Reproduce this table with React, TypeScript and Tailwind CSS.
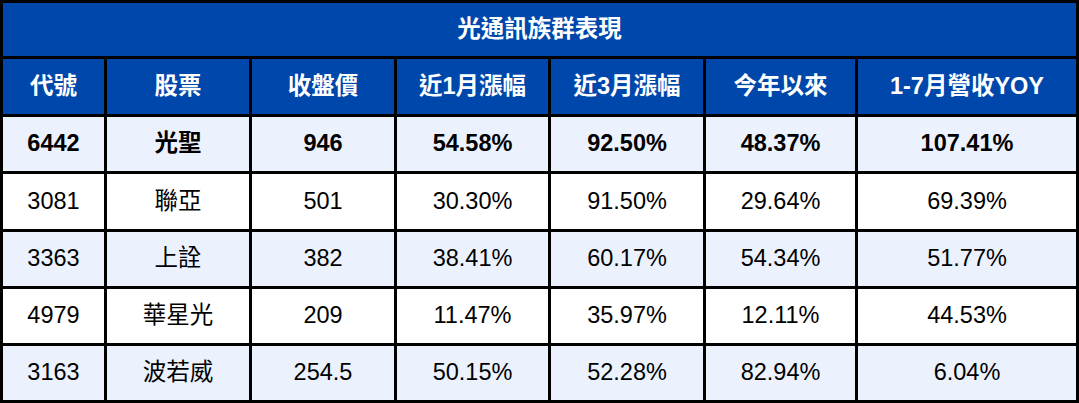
import type {FC} from "react"

type Row = {
  code: string
  name: string
  close: string
  m1: string
  m3: string
  ytd: string
  yoy: string
  bold?: boolean
}

const headers = ["代號", "股票", "收盤價", "近1月漲幅", "近3月漲幅", "今年以來", "1-7月營收YOY"]

const rows: Row[] = [
  {code: "6442", name: "光聖", close: "946", m1: "54.58%", m3: "92.50%", ytd: "48.37%", yoy: "107.41%", bold: true},
  {code: "3081", name: "聯亞", close: "501", m1: "30.30%", m3: "91.50%", ytd: "29.64%", yoy: "69.39%"},
  {code: "3363", name: "上詮", close: "382", m1: "38.41%", m3: "60.17%", ytd: "54.34%", yoy: "51.77%"},
  {code: "4979", name: "華星光", close: "209", m1: "11.47%", m3: "35.97%", ytd: "12.11%", yoy: "44.53%"},
  {code: "3163", name: "波若威", close: "254.5", m1: "50.15%", m3: "52.28%", ytd: "82.94%", yoy: "6.04%"},
]

const font = {fontFamily: '"Liberation Sans", "Noto Sans CJK TC", sans-serif'}

const Cell: FC<{text: string; bold?: boolean; light: boolean}> = ({text, bold, light}) => (
  <div
    className={`flex items-center justify-center text-[23.5px] text-black ${bold ? "font-bold" : ""} ${light ? "bg-[#ebf2fe]" : "bg-white"}`}>
    {text}
  </div>
)

const App: FC = () => {
  return (
    <div
      style={font}
      className="grid w-[1079px] grid-cols-[101px_142px_142px_151px_152px_149px_218px] grid-rows-[53px_55px_54px_55px_54px_54px_54px] gap-[3px] bg-black p-[3px]">
      <div className="col-span-7 flex items-center justify-center bg-[#0047ab] text-[23.5px] font-bold text-white">
        光通訊族群表現
      </div>
      {headers.map(h => (
        <div
          key={h}
          className="flex items-center justify-center bg-[#0047ab] text-[23.5px] font-bold text-white">
          {h}
        </div>
      ))}
      {rows.map((r, i) => {
        const light = i % 2 === 0
        return [r.code, r.name, r.close, r.m1, r.m3, r.ytd, r.yoy].map((t, j) => (
          <Cell key={`${i}-${j}`} text={t} bold={r.bold} light={light} />
        ))
      })}
    </div>
  )
}

export default App
